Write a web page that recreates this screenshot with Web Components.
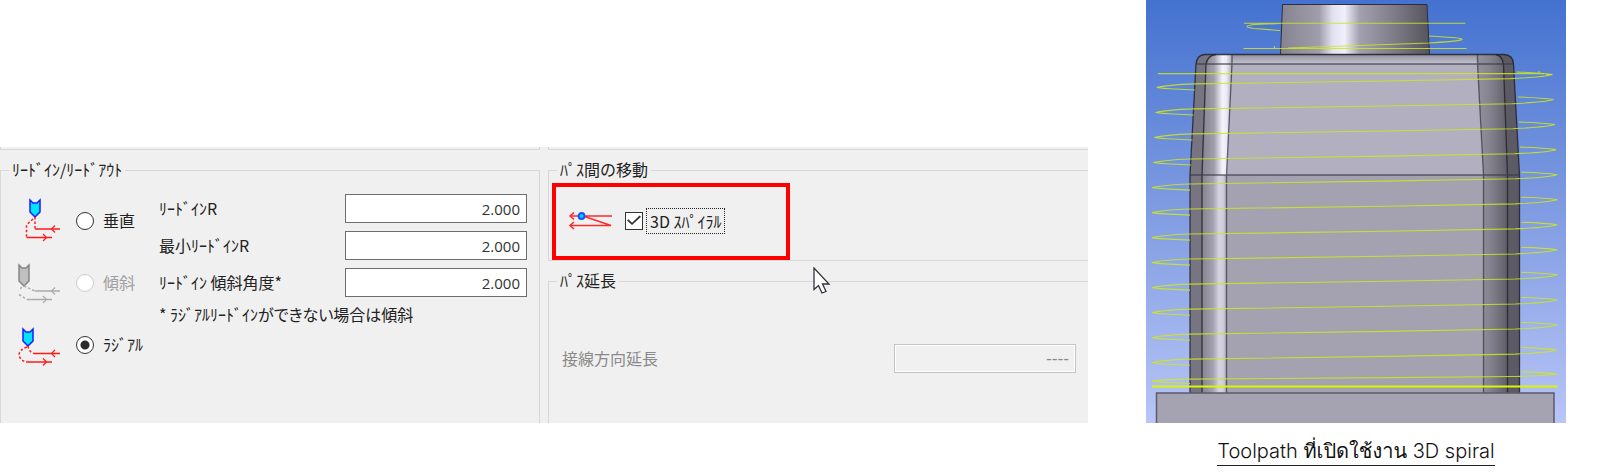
<!DOCTYPE html>
<html lang="ja">
<head>
<meta charset="utf-8">
<title>3D spiral</title>
<style>
    body {
        margin: 0;
        background: #ffffff;
        font-family: "Noto Sans CJK JP", sans-serif;
        font-size: 16px;
        line-height: 24px;
        color: #222222;
    }
</style>
</head>
<body>
<spiral-page>
    <settings-panel slot="panel">
        <group-box slot="left" heading="ﾘｰﾄﾞｲﾝ/ﾘｰﾄﾞｱｳﾄ">
            <lead-settings></lead-settings>
        </group-box>
        <group-box slot="right" heading="ﾊﾟｽ間の移動" closed>
            <spiral-toggle>3D ｽﾊﾟｲﾗﾙ</spiral-toggle>
        </group-box>
        <group-box slot="right" heading="ﾊﾟｽ延長">
            <extend-settings></extend-settings>
        </group-box>
    </settings-panel>
    <toolpath-figure slot="figure">Toolpath ที่เปิดใช้งาน 3D spiral</toolpath-figure>
</spiral-page>

<script>
class SpiralPage extends HTMLElement {
    constructor() {
        super();
        this.attachShadow({ mode: 'open' });
        this.shadowRoot.innerHTML = `
            <style>
                :host {
                    display: grid;
                    grid-template-columns: minmax(0, 1fr) minmax(0, 420px);
                    column-gap: 58px;
                    padding-right: 52px;
                    align-items: start;
                }
                #panel {
                    padding-top: 147px;
                }
            </style>
            <div id="panel"><slot name="panel"></slot></div>
            <slot name="figure"></slot>
        `;
    }
}

class SettingsPanel extends HTMLElement {
    constructor() {
        super();
        this.attachShadow({ mode: 'open' });
        this.shadowRoot.innerHTML = `
            <style>
                :host {
                    display: grid;
                    grid-template-columns: 1fr 1fr;
                    column-gap: 8px;
                    position: relative;
                    min-height: 276px;
                    background: #f0f0f0;
                }
                .column {
                    display: flex;
                    flex-direction: column;
                    gap: 7px;
                }
                /* lower edge of the groups scrolled out above */
                .edge {
                    height: 3px;
                    box-sizing: border-box;
                    border: 1px solid #d8d8d8;
                    border-top: 0;
                }
                .right .edge {
                    border-right: 0;
                }
                ::slotted(group-box:not([closed])) {
                    flex: 1;
                }
                #cursor {
                    position: absolute;
                    left: 813px;
                    top: 120px;
                }
            </style>
            <div class="column"><div class="edge"></div><slot name="left"></slot></div>
            <div class="column right"><div class="edge"></div><slot name="right"></slot></div>
            <svg id="cursor" width="18" height="28" viewBox="0 0 18 28">
                <path d="M1 1V22.500L5.500 18.500L9 26L13 24.500L9.500 17H16Z" fill="#fff" stroke="#33333f" stroke-width="1.300"/>
            </svg>
        `;
    }
}

class GroupBox extends HTMLElement {
    constructor() {
        super();
        this.attachShadow({ mode: 'open' });
        this.shadowRoot.innerHTML = `
            <style>
                :host {
                    display: flex;
                }
                fieldset {
                    flex: 1;
                    min-width: 0;
                    margin: 0;
                    padding: 0;
                    border: 1px solid #d8d8d8;
                    border-bottom: 0;
                }
                :host([slot="right"]) fieldset {
                    border-right: 0;
                }
                :host([closed]) fieldset {
                    border-bottom: 1px solid #d8d8d8;
                }
                legend {
                    margin-left: 8px;
                    padding: 0 3px 2px;
                }
            </style>
            <fieldset>
                <legend></legend>
                <slot></slot>
            </fieldset>
        `;
        this.shadowRoot.querySelector('legend').textContent = this.getAttribute('heading');
    }
}

const TOOL_ICONS = {
    vertical: `
        <path class="tool" d="M14 3L17 6H21L24 3V15L19 20L14 15Z"/>
        <path d="M19 32H44M10.500 40.500H36"/>
        <path class="dash" d="M19 20V32M17 22L10.500 28V40.500"/>
        <path class="head" d="M39 28.500L35.500 32L39 35.500M27 37L30.500 40.500L27 44"/>`,
    slope: `
        <path class="tool" d="M3 6L6 9H10L13 6V22L8 27L3 22Z"/>
        <path d="M19 32H44M11 40.500H36"/>
        <path class="dash" d="M8 27L19 32M6 28L3 31M3 35.500L11 40.500"/>
        <path class="head" d="M39 28.500L35.500 32L39 35.500M27 37L30.500 40.500L27 44"/>`,
    radial: `
        <path class="tool" d="M7 8L10 11H14L17 8V20L12 25L7 20Z"/>
        <path d="M18 32.500H44M10 41H36"/>
        <path class="dash" d="M12 25Q13 31 18 32.500M11 26Q3 29 3 34Q4 39 10 41"/>
        <path class="head" d="M39 29L35.500 32.500L39 36M27 37.500L30.500 41L27 44.500"/>`
};

class ToolIcon extends HTMLElement {
    constructor() {
        super();
        this.attachShadow({ mode: 'open' });
        this.shadowRoot.innerHTML = `
            <style>
                :host {
                    display: block;
                    width: 48px;
                    height: 48px;
                    --line: #ff1a1a;
                    --edge: #1a1aff;
                    --fill: #00e5ff;
                }
                :host([muted]) {
                    --line: #ababab;
                    --edge: #858585;
                    --fill: #c0c0c0;
                }
                path {
                    fill: none;
                    stroke: var(--line);
                    stroke-width: 1.5;
                }
                .tool {
                    fill: var(--fill);
                    stroke: var(--edge);
                }
                .dash {
                    stroke-dasharray: 2.5 2;
                }
                .head {
                    stroke-width: 1.2;
                }
            </style>
            <svg width="48" height="48" viewBox="0 0 48 48">${TOOL_ICONS[this.getAttribute('name')]}</svg>
        `;
    }
}

class NumberField extends HTMLElement {
    constructor() {
        super();
        this.attachShadow({ mode: 'open' });
        this.shadowRoot.innerHTML = `
            <style>
                :host {
                    display: flex;
                    align-items: center;
                    justify-content: space-between;
                }
                label {
                    padding-bottom: 2px;
                }
                input {
                    box-sizing: border-box;
                    width: 182px;
                    height: 29px;
                    margin: 0;
                    padding: 0 6px;
                    border: 1px solid #6e6e6e;
                    border-radius: 0;
                    background: #ffffff;
                    color: #333333;
                    font-family: "Open Sans", sans-serif;
                    font-size: 15px;
                    text-align: right;
                }
                input:disabled {
                    border-color: #c4c4c4;
                    box-shadow: inset 0 0 0 1px #ffffff;
                    background: #f0f0f0;
                    color: #8a8a8a;
                    font-family: "DejaVu Sans", sans-serif;
                    font-size: 16px;
                }
                :host([disabled]) label {
                    color: #8a8a8a;
                }
            </style>
            <label for="value"></label>
            <input id="value" type="text">
        `;
        const input = this.shadowRoot.querySelector('input');
        this.shadowRoot.querySelector('label').textContent = this.getAttribute('label');
        input.value = this.getAttribute('value');
        input.disabled = this.hasAttribute('disabled');
    }
}

class LeadSettings extends HTMLElement {
    constructor() {
        super();
        this.attachShadow({ mode: 'open' });
        this.shadowRoot.innerHTML = `
            <style>
                :host {
                    display: flex;
                    padding: 7px 12px 0 15px;
                }
                #types {
                    width: 143px;
                }
                .type {
                    display: flex;
                    align-items: center;
                    height: 62px;
                }
                .type input {
                    appearance: none;
                    box-sizing: border-box;
                    width: 18px;
                    height: 18px;
                    margin: 0 9px 0 12px;
                    border: 1px solid #333333;
                    border-radius: 50%;
                    background: #ffffff;
                }
                .type label {
                    padding-bottom: 2px;
                }
                .type input:checked {
                    background: radial-gradient(circle, #2b2b2b 4px, #ffffff 5px);
                }
                .type input:disabled {
                    border-color: #cccccc;
                }
                .type input:disabled + label {
                    color: #a0a0a0;
                }
                #fields {
                    flex: 1;
                    display: flex;
                    flex-direction: column;
                    gap: 8px;
                    padding-top: 4px;
                }
                p {
                    margin: 0;
                    line-height: 18px;
                    font-feature-settings: "palt";
                }
            </style>
            <div id="types">
                <div class="type">
                    <tool-icon name="vertical"></tool-icon>
                    <input type="radio" name="type" id="vertical"><label for="vertical">垂直</label>
                </div>
                <div class="type">
                    <tool-icon name="slope" muted></tool-icon>
                    <input type="radio" name="type" id="slope" disabled><label for="slope">傾斜</label>
                </div>
                <div class="type">
                    <tool-icon name="radial"></tool-icon>
                    <input type="radio" name="type" id="radial" checked><label for="radial">ﾗｼﾞｱﾙ</label>
                </div>
            </div>
            <div id="fields">
                <number-field label="ﾘｰﾄﾞｲﾝR" value="2.000"></number-field>
                <number-field label="最小ﾘｰﾄﾞｲﾝR" value="2.000"></number-field>
                <number-field label="ﾘｰﾄﾞｲﾝ 傾斜角度*" value="2.000"></number-field>
                <p>* ﾗｼﾞｱﾙﾘｰﾄﾞｲﾝができない場合は傾斜</p>
            </div>
        `;
    }
}

class SpiralToggle extends HTMLElement {
    constructor() {
        super();
        this.attachShadow({ mode: 'open' });
        this.shadowRoot.innerHTML = `
            <style>
                :host {
                    display: flex;
                    align-items: center;
                    box-sizing: border-box;
                    width: 238px;
                    height: 77px;
                    margin-left: 3px;
                    padding: 0 0 2px 12px;
                    border: 4px solid #ff0000;
                }
                input {
                    appearance: none;
                    box-sizing: border-box;
                    width: 18px;
                    height: 18px;
                    margin: 0 3px 0 12px;
                    border: 1px solid #333333;
                    background: #ffffff;
                    display: grid;
                    place-items: center;
                }
                input:checked::before {
                    content: "";
                    width: 14px;
                    height: 11px;
                    background: #333333;
                    clip-path: polygon(0 50%, 10% 38%, 36% 70%, 90% 5%, 100% 15%, 36% 92%);
                }
                label {
                    padding: 0 3px;
                    border: 1px dotted #222222;
                }
            </style>
            <svg width="45" height="18" viewBox="0 0 45 18" fill="none" stroke="#ff2a2a" stroke-width="1.500">
                <path d="M2 4H44M2 13.500H43L15 4"/>
                <path d="M6 0.500L2 4L6 7.500M6 10L2 13.500L6 17"/>
                <circle cx="13.500" cy="4" r="3" fill="#00d0ff" stroke="#1a4dff" stroke-width="1.800"/>
            </svg>
            <input type="checkbox" id="spiral" checked>
            <label for="spiral"><slot></slot></label>
        `;
    }
}

class ExtendSettings extends HTMLElement {
    constructor() {
        super();
        this.attachShadow({ mode: 'open' });
        this.shadowRoot.innerHTML = `
            <style>
                :host {
                    display: block;
                    padding: 50px 12px 0 13px;
                }
            </style>
            <number-field label="接線方向延長" value="----" disabled></number-field>
        `;
    }
}

// One turn runs down the front from the right tip to the left tip,
// with short stubs where it goes round behind the part.
function turn(rx, ry, lx, ly) {
    const d = ly - ry;
    return `M${lx + 38} ${ly + 2.5}L${lx + 18} ${ly + 1.5}Q${lx + 6} ${ly + 1} ${lx} ${ly}
        Q${lx + 10} ${ly - d * 0.2} ${lx + 38} ${ly - d * 0.28}L240 ${ry + d * 0.5}
        L${rx - 42} ${ry + d * 0.32}Q${rx - 8} ${ry + d * 0.2} ${rx} ${ry}Q${rx - 14} ${ry - 2} ${rx - 36} ${ry - 2.5}`;
}

function spiral() {
    let path = '';
    for (let i = 0; i < 12; i++) {
        const slant = Math.min(i, 4) * 1.2;
        path += turn(406.5 + slant, 74.5 + i * 25.05, 10.8 - slant, 87.5 + i * 25.02);
    }
    return path + turn(411.5, 374.3, 6, 381);
}

class ToolpathFigure extends HTMLElement {
    constructor() {
        super();
        this.attachShadow({ mode: 'open' });
        this.shadowRoot.innerHTML = `
            <style>
                :host {
                    display: block;
                }
                figure {
                    margin: 0;
                    text-align: center;
                }
                svg {
                    display: block;
                    width: 100%;
                    height: auto;
                }
                figcaption {
                    padding-top: 14px;
                    color: #111111;
                    font-family: Inter, Loma, Garuda, Waree, sans-serif;
                    font-size: 20px;
                    font-weight: 300;
                    line-height: 28px;
                }
                figcaption span {
                    display: inline-block;
                    border-bottom: 1px solid #222222;
                }
            </style>
            <figure>
                <svg viewBox="0 0 420 423">
                    <defs>
                        <linearGradient id="sky" x2="0" y2="1">
                            <stop offset="0" stop-color="#4472d0"/>
                            <stop offset=".5" stop-color="#809ce2"/>
                            <stop offset="1" stop-color="#b8c5f7"/>
                        </linearGradient>
                        <linearGradient id="boss">
                            <stop offset="0" stop-color="#85838f"/>
                            <stop offset=".26" stop-color="#a09eac"/>
                            <stop offset=".35" stop-color="#e2e1f0"/>
                            <stop offset=".43" stop-color="#f0effb"/>
                            <stop offset=".53" stop-color="#a3a1b0"/>
                            <stop offset=".75" stop-color="#807e8a"/>
                            <stop offset="1" stop-color="#55545d"/>
                        </linearGradient>
                        <linearGradient id="lit">
                            <stop offset="0" stop-color="#85838f"/>
                            <stop offset=".4" stop-color="#a09eab"/>
                            <stop offset=".68" stop-color="#f4f3fd"/>
                            <stop offset=".82" stop-color="#eae9f5"/>
                            <stop offset="1" stop-color="#aaa8b7"/>
                        </linearGradient>
                        <linearGradient id="litLow">
                            <stop offset="0" stop-color="#85838f"/>
                            <stop offset=".45" stop-color="#a5a3b1"/>
                            <stop offset=".68" stop-color="#d6d4e3"/>
                            <stop offset=".84" stop-color="#d0cedd"/>
                            <stop offset="1" stop-color="#a5a3b1"/>
                        </linearGradient>
                        <linearGradient id="shade">
                            <stop offset="0" stop-color="#93919e"/>
                            <stop offset=".4" stop-color="#858390"/>
                            <stop offset="1" stop-color="#5f5e68"/>
                        </linearGradient>
                        <linearGradient id="rim" x2="0" y2="1">
                            <stop offset="0" stop-color="#92909d"/>
                            <stop offset="1" stop-color="#c5c3d2"/>
                        </linearGradient>
                    </defs>
                    <rect width="420" height="423" fill="url(#sky)"/>
                    <path d="M136.500 4.500H281L283.500 54.500H134.500Z" fill="url(#boss)" stroke="#2f2e38"/>

                    <path d="M50 64Q51 55 59 54.500H358Q367 55 367.500 64L373.500 175V393H44V175Z" fill="#777582"/>
                    <path d="M60 64L56 175V393H81V175L86 64L86 54.500H70Q62 55 60 64Z" fill="url(#lit)"/>
                    <rect x="56" y="175" width="25" height="218" fill="url(#litLow)"/>
                    <path d="M86 64H332L337.500 175H80.500Z" fill="#b2b0c0"/>
                    <path d="M86 54.500H332V64H86Z" fill="url(#rim)"/>
                    <rect x="81" y="175" width="257" height="218" fill="#a4a2b1"/>
                    <path d="M332 54.500H350Q356 56 357.500 64L361.500 175V393H337.500V175Z" fill="url(#shade)"/>
                    <path d="M350 54.500Q356 56 357.500 64L361.500 175V393H373.500V175L367.500 64Q367 55 358 54.500Z" fill="#5c5b65"/>
                    <g fill="none" stroke="#24232c" stroke-opacity=".85" stroke-width="1.300">
                        <path d="M50 64Q51 55 59 54.500H358Q367 55 367.500 64L373.500 175V393M50 64L44 175V393"/>
                        <path d="M70 54.500Q62 55 60 64L56 175V393M350 54.500Q356 56 357.500 64L361.500 175V393"/>
                    </g>
                    <g fill="none" stroke="#3a3944" stroke-opacity=".75" stroke-width="1.300">
                        <path d="M86 54.500V64L80.500 175V393M331.500 54.500V64L337.500 175V393M50 64H367.500M44 175H373.500"/>
                    </g>
                    <path d="M10.500 423V393H408V423Z" fill="#a5a3b2"/>
                    <path d="M10.500 423V393H408V423" fill="none" stroke="#5c5b67" stroke-width="1.500"/>

                    <g fill="none" stroke="#cfe61f" stroke-opacity=".85" stroke-width="1.100">
                        <path d="M98 23.200H319.500M134 23.500L108 24.500Q94 26.500 108 28.500L134 30.500"/>
                        <path d="M97.500 48.500H320.500M283 36L306 37.500Q334 40 283 43L142 48M128.500 46V48"/>
                        <path d="M12 73.600H398M393 71V74M400 74.500H406"/>
                        <path d="${spiral()}"/>
                    </g>
                    <path d="M6 386.500H411.500" stroke="#dcf500" stroke-width="1.800"/>
                </svg>
                <figcaption><span lang="th"><slot></slot></span></figcaption>
            </figure>
        `;
    }
}

customElements.define('tool-icon', ToolIcon);
customElements.define('number-field', NumberField);
customElements.define('lead-settings', LeadSettings);
customElements.define('spiral-toggle', SpiralToggle);
customElements.define('extend-settings', ExtendSettings);
customElements.define('group-box', GroupBox);
customElements.define('settings-panel', SettingsPanel);
customElements.define('toolpath-figure', ToolpathFigure);
customElements.define('spiral-page', SpiralPage);
</script>
</body>
</html>
